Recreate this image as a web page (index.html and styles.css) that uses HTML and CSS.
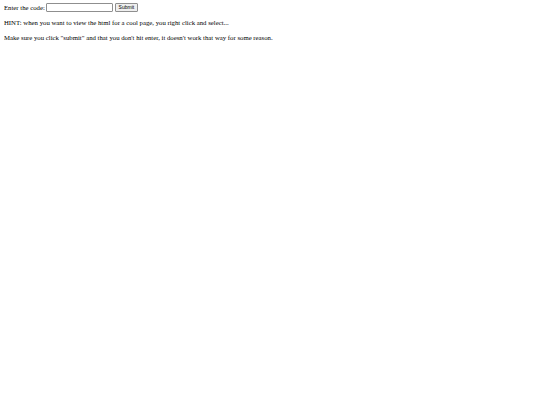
FILE: index.html
```html
<!DOCTYPE html>
<html>
<head>
<meta charset="utf-8">
<link rel="stylesheet" href="styles.css">
</head>
<body>
<form class="row">
  <label class="label" for="code">Enter the code:</label>
  <input class="field" id="code" type="text">
  <button class="btn" type="button">Submit</button>
</form>
<p class="line">HINT: when you want to view the html for a cool page, you right click and select...</p>
<p class="line">Make sure you click "submit" and that you don't hit enter, it doesn't work that way for some reason.</p>
</body>
</html>
```
FILE: styles.css
```css
html, body {
  background: #fff;
}
body {
  margin: 0 4px;
  font-family: "Liberation Serif", "Times New Roman", serif;
  font-size: 6.75px;
  color: #000;
}
.row {
  display: flex;
  align-items: center;
  height: 15px;
  margin: 0;
}
.label {
  line-height: 15px;
  margin-right: 1px;
}
.field {
  box-sizing: border-box;
  width: 67px;
  height: 9px;
  margin: 0 2px 0 0;
  padding: 0;
  border: 1px solid #8f8f8f;
  border-radius: 1px;
  background: #fff;
}
.btn {
  box-sizing: border-box;
  height: 9px;
  width: 23px;
  margin: 0;
  padding: 0;
  border: 1px solid #8f8f8f;
  border-radius: 1px;
  background: #efefef;
  font-family: "Liberation Sans", Arial, sans-serif;
  font-size: 5px;
  line-height: 7px;
  color: #000;
}
.line {
  margin: 0;
  line-height: 15px;
}
.line + .line {
  margin-top: -0.5px;
}
```
